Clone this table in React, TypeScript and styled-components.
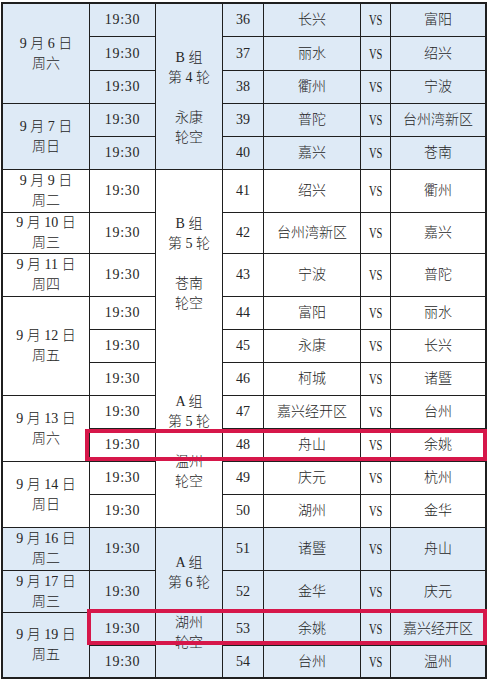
import React from 'react';
import styled, { createGlobalStyle } from 'styled-components';

const GlobalStyle = createGlobalStyle`
  html, body {
    margin: 0;
    padding: 0;
    background: #ffffff;
  }

  body {
    font-family: "Liberation Serif", "Noto Sans CJK SC", serif;
    color: #262626;
  }
`;

const Page = styled.div`
  padding: 2px 0 0 1px;
`;

const Sheet = styled.div`
  position: relative;
  width: 486px;
`;

const Grid = styled.div`
  display: grid;
  grid-template-columns: 86px 65px 66px 40px 96px 29px 94px;
  grid-template-rows:
    32px 33px 32px 32px 32px
    42px 40px 42px
    32px 32px 32px 32px 32px 32px 32px
    42px 41px 32px 31px;
  gap: 1px;
  padding: 2px;
  background: #1f1f1f;
`;

const Cell = styled.div<{ $col: number; $row: number; $span?: number; $tint: boolean }>`
  grid-column: ${({ $col }) => $col};
  grid-row: ${({ $row, $span }) => `${$row} / span ${$span ?? 1}`};
  background: ${({ $tint }) => ($tint ? '#deeaf6' : '#ffffff')};
  display: flex;
  flex-direction: column;
  align-items: center;
  justify-content: center;
  text-align: center;
  font-size: 14px;
  line-height: 20px;
  white-space: nowrap;
`;

const DateCell = styled(Cell)`
  font-weight: 300;
`;

const TimeCell = styled(Cell)`
  letter-spacing: 0.7px;
`;

const GroupCell = styled(Cell)`
  justify-content: stretch;
  align-items: stretch;
  font-weight: 300;
`;

const GroupBlock = styled.div<{ $grow: number; $top: number; $bottom: number }>`
  flex: ${({ $grow }) => $grow} 1 0;
  display: flex;
  flex-direction: column;
  justify-content: center;
  padding: ${({ $top, $bottom }) => `${$top}px 0 ${$bottom}px`};
`;

const NumCell = styled(Cell)``;

const TeamCell = styled(Cell)`
  font-weight: 300;
`;

const VsCell = styled(Cell)``;

const VsMark = styled.span`
  display: inline-block;
  font-size: 15px;
  transform: scaleX(0.7);
  color: #1a1a1a;
`;

const Highlight = styled.div<{ $left: number; $top: number; $width: number; $height: number }>`
  position: absolute;
  left: ${({ $left }) => $left}px;
  top: ${({ $top }) => $top}px;
  width: ${({ $width }) => $width}px;
  height: ${({ $height }) => $height}px;
  box-sizing: border-box;
  border: 4px solid #d6174a;
  pointer-events: none;
`;

type Match = { no: number; home: string; away: string };

const matches: Match[] = [
  { no: 36, home: '长兴', away: '富阳' },
  { no: 37, home: '丽水', away: '绍兴' },
  { no: 38, home: '衢州', away: '宁波' },
  { no: 39, home: '普陀', away: '台州湾新区' },
  { no: 40, home: '嘉兴', away: '苍南' },
  { no: 41, home: '绍兴', away: '衢州' },
  { no: 42, home: '台州湾新区', away: '嘉兴' },
  { no: 43, home: '宁波', away: '普陀' },
  { no: 44, home: '富阳', away: '丽水' },
  { no: 45, home: '永康', away: '长兴' },
  { no: 46, home: '柯城', away: '诸暨' },
  { no: 47, home: '嘉兴经开区', away: '台州' },
  { no: 48, home: '舟山', away: '余姚' },
  { no: 49, home: '庆元', away: '杭州' },
  { no: 50, home: '湖州', away: '金华' },
  { no: 51, home: '诸暨', away: '舟山' },
  { no: 52, home: '金华', away: '庆元' },
  { no: 53, home: '余姚', away: '嘉兴经开区' },
  { no: 54, home: '台州', away: '温州' },
];

const dates = [
  { day: '9 月 6 日', week: '周六', row: 1, span: 3 },
  { day: '9 月 7 日', week: '周日', row: 4, span: 2 },
  { day: '9 月 9 日', week: '周二', row: 6, span: 1 },
  { day: '9 月 10 日', week: '周三', row: 7, span: 1 },
  { day: '9 月 11 日', week: '周四', row: 8, span: 1 },
  { day: '9 月 12 日', week: '周五', row: 9, span: 3 },
  { day: '9 月 13 日', week: '周六', row: 12, span: 2 },
  { day: '9 月 14 日', week: '周日', row: 14, span: 2 },
  { day: '9 月 16 日', week: '周二', row: 16, span: 1 },
  { day: '9 月 17 日', week: '周三', row: 17, span: 1 },
  { day: '9 月 19 日', week: '周五', row: 18, span: 2 },
];

const groups = [
  {
    row: 1,
    span: 5,
    blocks: [{ lines: ['B 组', '第 4 轮', '', '永康', '轮空'], grow: 1, top: 23, bottom: 0 }],
  },
  {
    row: 6,
    span: 10,
    blocks: [
      { lines: ['B 组', '第 5 轮', '', '苍南', '轮空'], grow: 225, top: 0, bottom: 30 },
      { lines: ['A 组', '第 5 轮', '', '温州', '轮空'], grow: 131, top: 0, bottom: 30 },
    ],
  },
  {
    row: 16,
    span: 4,
    blocks: [{ lines: ['A 组', '第 6 轮', '', '湖州', '轮空'], grow: 1, top: 0, bottom: 0 }],
  },
];

// rows of the first and last week blocks are shaded blue
const isTinted = (row: number) => row <= 5 || row >= 16;

const App: React.FC = () => {
  return (
    <Page>
      <GlobalStyle />
      <Sheet>
        <Grid>
          {dates.map((d) => (
            <DateCell key={d.day} $col={1} $row={d.row} $span={d.span} $tint={isTinted(d.row)}>
              <span>{d.day}</span>
              <span>{d.week}</span>
            </DateCell>
          ))}

          {groups.map((g) => (
            <GroupCell key={g.row} $col={3} $row={g.row} $span={g.span} $tint={isTinted(g.row)}>
              {g.blocks.map((b, i) => (
                <GroupBlock key={i} $grow={b.grow} $top={b.top} $bottom={b.bottom}>
                  {b.lines.map((line, j) => (
                    <span key={j}>{line || '\u00a0'}</span>
                  ))}
                </GroupBlock>
              ))}
            </GroupCell>
          ))}

          {matches.map((m, i) => {
            const row = i + 1;
            const tint = isTinted(row);
            return (
              <React.Fragment key={m.no}>
                <TimeCell $col={2} $row={row} $tint={tint}>19:30</TimeCell>
                <NumCell $col={4} $row={row} $tint={tint}>{m.no}</NumCell>
                <TeamCell $col={5} $row={row} $tint={tint}>{m.home}</TeamCell>
                <VsCell $col={6} $row={row} $tint={tint}>
                  <VsMark>VS</VsMark>
                </VsCell>
                <TeamCell $col={7} $row={row} $tint={tint}>{m.away}</TeamCell>
              </React.Fragment>
            );
          })}
        </Grid>

        <Highlight $left={84} $top={427} $width={402} $height={32} />
        <Highlight $left={86} $top={607} $width={400} $height={36} />
      </Sheet>
    </Page>
  );
};

export default App;
